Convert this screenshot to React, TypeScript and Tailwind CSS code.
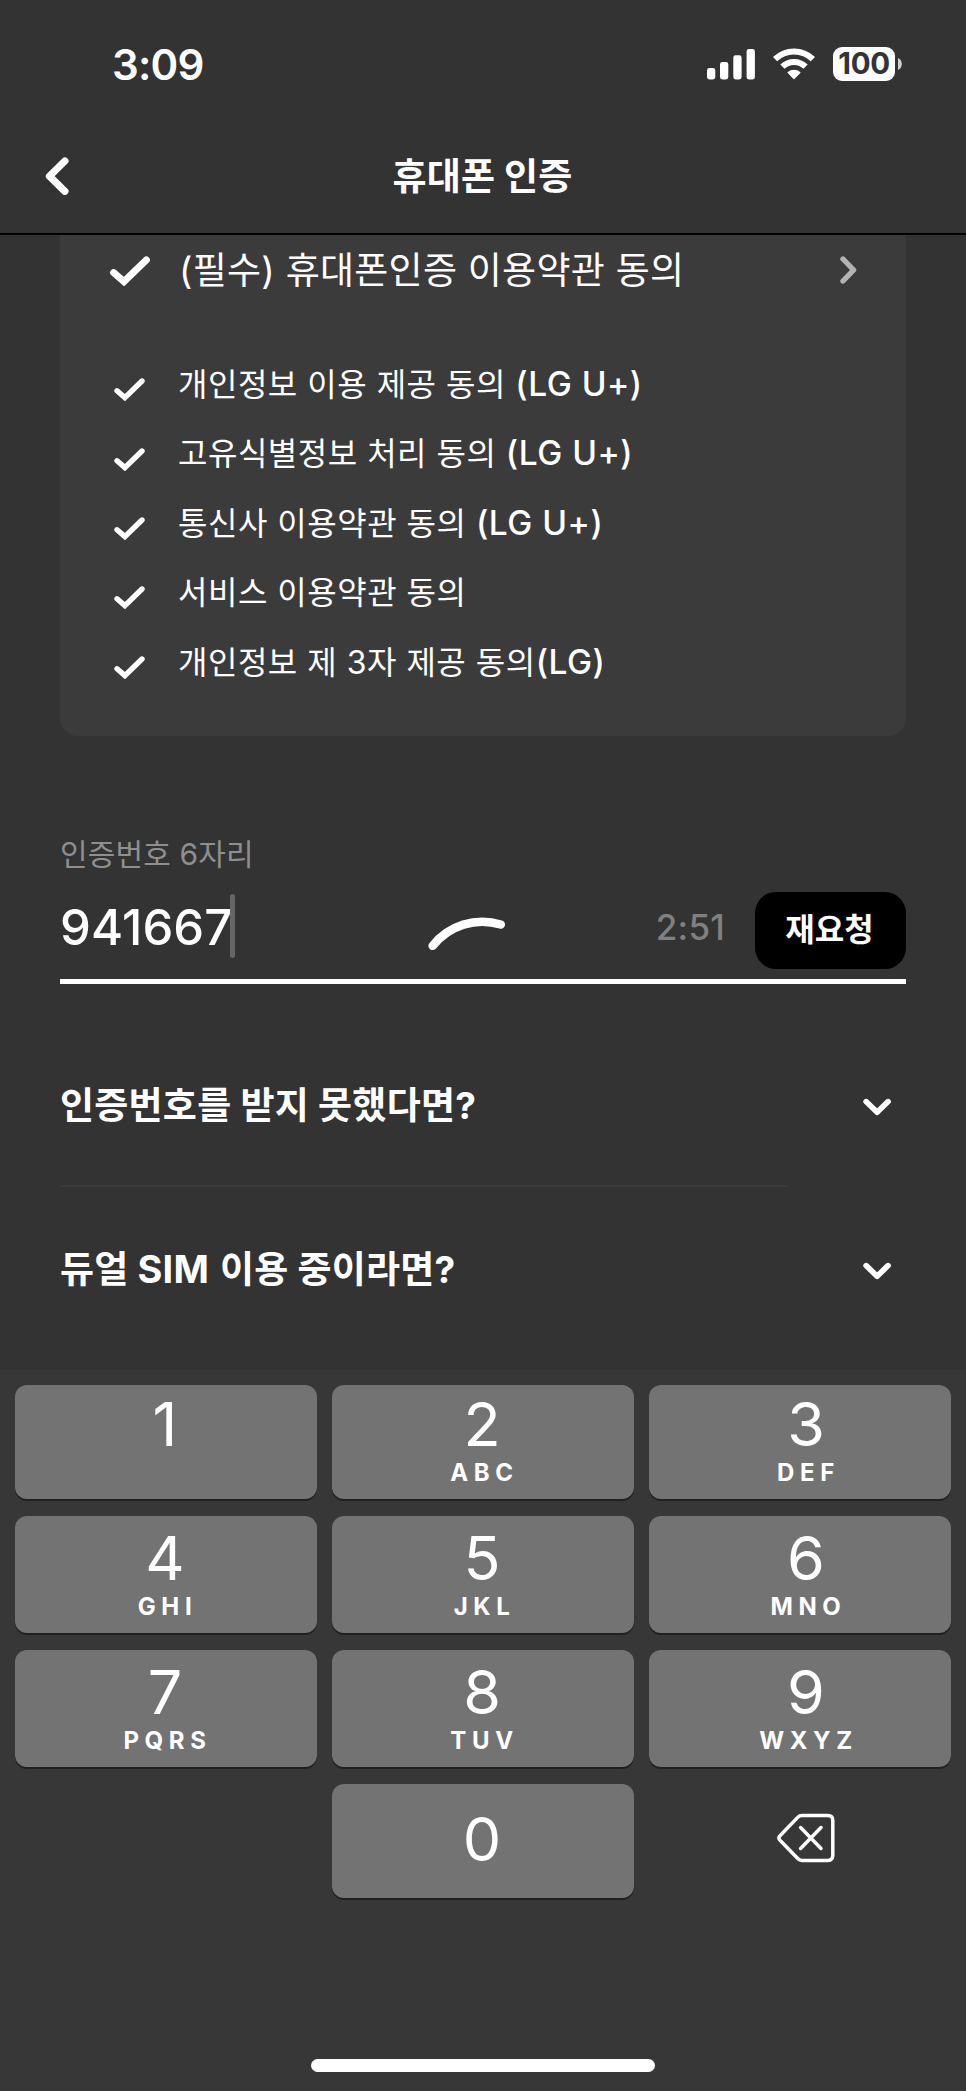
import React from 'react';

interface Key {
  digit: string;
  letters?: string;
}

interface Agreement {
  text: string;
  suffix?: string;
}

const agreements: Agreement[] = [
  { text: '개인정보 이용 제공 동의', suffix: ' (LG U+)' },
  { text: '고유식별정보 처리 동의', suffix: ' (LG U+)' },
  { text: '통신사 이용약관 동의', suffix: ' (LG U+)' },
  { text: '서비스 이용약관 동의' },
  { text: '개인정보 제 3자 제공 동의', suffix: '(LG)' }
];

const keys: Key[] = [
  { digit: '1' },
  { digit: '2', letters: 'ABC' },
  { digit: '3', letters: 'DEF' },
  { digit: '4', letters: 'GHI' },
  { digit: '5', letters: 'JKL' },
  { digit: '6', letters: 'MNO' },
  { digit: '7', letters: 'PQRS' },
  { digit: '8', letters: 'TUV' },
  { digit: '9', letters: 'WXYZ' }
];

const CheckIcon = ({ className }: { className: string }) => (
  <svg viewBox="0 0 40 30" fill="none" className={className}>
    <path d="M3.7 16.6L14 25.6L36.3 3.9" stroke="white" strokeWidth="7" strokeLinecap="round" />
  </svg>
);

const ChevronDown = () => (
  <svg viewBox="0 0 30 20" fill="none" className="w-[30px] h-5 mr-[14px] mt-[3px]">
    <path d="M4.1 4.6L15.1 15.2L26.1 4.6" stroke="white" strokeWidth="5.6" strokeLinecap="round" strokeLinejoin="round" />
  </svg>
);

const StatusBar = () => (
  <div className="flex h-[128px] pl-[112px] pr-[64px] justify-between items-center">
    <span className="text-[42px] font-semibold leading-none tracking-[-0.8px] mt-[2px]">3:09</span>
    <div className="flex items-center">
      <svg viewBox="0 0 48 32" className="w-12 h-8" fill="white">
        <rect x="0" y="20" width="8.3" height="11.4" rx="2.4" />
        <rect x="13" y="14" width="8.3" height="17.4" rx="2.4" />
        <rect x="26.3" y="7.3" width="8.3" height="24.1" rx="2.4" />
        <rect x="39.6" y="1" width="8.3" height="30.4" rx="2.4" />
      </svg>
      <svg viewBox="0 0 42 32" className="w-[42px] h-8 ml-[18px]" fill="none">
        <path d="M2.1 11.2A27 27 0 0 1 39.9 11.2" stroke="white" strokeWidth="6" />
        <path d="M9.4 18.7A16.6 16.6 0 0 1 32.6 18.7" stroke="white" strokeWidth="6" />
        <path d="M21 30.6L15.2 24.6A9 9 0 0 1 26.8 24.6Z" fill="white" stroke="white" strokeWidth="1.4" strokeLinejoin="round" />
      </svg>
      <div className="w-[62px] h-[34px] ml-[18px] bg-white rounded-[9px] flex items-center justify-center">
        <span className="text-[29.5px] font-bold leading-none text-[#333333] tracking-[-0.4px]">100</span>
      </div>
      <svg viewBox="0 0 4 12" className="w-1 h-3 ml-[3px]" fill="#d0d0d0">
        <path d="M0 0C5 1.5 5 10.5 0 12Z" />
      </svg>
    </div>
  </div>
);

const Header = () => (
  <header className="grid grid-cols-[100px_1fr_100px] h-[107px] pb-[9px] items-center border-b-2 border-black">
    <svg viewBox="0 0 24 40" fill="none" className="w-6 h-10 ml-[45px]">
      <path d="M19.9 5L4.4 20.2L19.9 35.3" stroke="white" strokeWidth="7.2" strokeLinecap="round" strokeLinejoin="round" />
    </svg>
    <h1 className="text-center text-[37px] font-bold leading-none tracking-[0.15px] pr-px">휴대폰 인증</h1>
  </header>
);

const Agreements = () => (
  <section className="mx-[60px] h-[501px] bg-[#3b3b3b] rounded-b-[18px] px-[50px]">
    <div className="flex items-center h-[72px]">
      <CheckIcon className="w-10 h-[30px]" />
      <span className="ml-[29px] mb-[2px] text-[37px] leading-none tracking-[0.25px] whitespace-nowrap">(필수) 휴대폰인증 이용약관 동의</span>
      <svg viewBox="0 0 18 30" fill="none" className="w-[18px] h-[30px] ml-auto -mr-px mb-[3px]">
        <path d="M4 4L14.6 15L4 26" stroke="#b3b3b3" strokeWidth="5.4" strokeLinecap="round" strokeLinejoin="round" />
      </svg>
    </div>
    <ul className="pt-[43px] pl-1">
      {agreements.map((item) => (
        <li key={item.text} className="flex items-center h-[69.4px]">
          <CheckIcon className="w-[31px] h-[23px] mt-[10px]" />
          <span className="ml-[33px] text-[32px] leading-none tracking-[0.5px] whitespace-pre">
            {item.text}
            {item.suffix && <span className="text-[33.5px] font-[450] leading-none">{item.suffix}</span>}
          </span>
        </li>
      ))}
    </ul>
  </section>
);

const CodeField = () => (
  <section className="mx-[60px] pt-[98px]">
    <label className="block h-[40px] text-[30px] leading-[40px] tracking-[0.15px] text-[#8f8f8f]">인증번호 6자리</label>
    <div className="flex items-center h-[110px] pt-[4px] border-b-[5px] border-white">
      <span className="text-[49px] font-medium leading-none tracking-[0.1px] w-[170px] mb-[3px] whitespace-nowrap">941667</span>
      <span className="w-[5px] h-16 mb-[5px] rounded-sm bg-[#666666]" />
      {/* Loading spinner */}
      <svg viewBox="0 0 80 40" fill="none" className="w-20 h-10 ml-[192px] mt-[11px]">
        <path d="M5.7 31.8A63.2 63.2 0 0 1 73.7 10.5" stroke="white" strokeWidth="8.6" strokeLinecap="round" />
      </svg>
      <span className="ml-auto mr-[30px] mb-[2px] text-[35px] font-[450] leading-none tracking-[0.2px] text-[#808080]">2:51</span>
      <button className="w-[151px] h-[77px] mt-[3px] pr-[2px] rounded-[21px] bg-black text-[32px] font-bold leading-none">재요청</button>
    </div>
  </section>
);

const Faq = () => (
  <section className="mx-[60px] pt-[39px]">
    <div className="flex items-center justify-between h-[164px]">
      <span className="text-[37px] font-bold leading-none tracking-[0.25px]">인증번호를 받지 못했다면?</span>
      <ChevronDown />
    </div>
    <div className="w-[728px] h-0.5 -mt-0.5 bg-[#3b3b3b]" />
    <div className="flex items-center justify-between h-[164px]">
      <span className="text-[37px] font-bold leading-none tracking-[0.2px]">
        듀얼 <span className="text-[38px] leading-none mr-[2px]">SIM</span> 이용 중이라면?
      </span>
      <ChevronDown />
    </div>
  </section>
);

const Keypad = () => (
  <div className="h-[721px] bg-[#373737] px-[15px] pt-[15px] flex flex-col">
    <div className="grid grid-cols-3 grid-rows-[114px_117px_117px_114px] gap-x-[15px] gap-y-[17px]">
      {keys.map((key, i) => (
        <button
          key={key.digit}
          className={`rounded-[12px] bg-[#737373] shadow-[0_2px_0_#202020] flex flex-col items-center justify-end pb-[14px] ${i % 3 === 2 ? 'pl-3' : 'pr-[2px]'}`}
        >
          <span className="text-[61px] leading-[62px] h-[62px]">{key.digit}</span>
          <span className="text-[24px] font-bold leading-6 h-6 mt-[6px] pl-[5px] tracking-[5.6px]">{key.letters}</span>
        </button>
      ))}
      <span />
      <button className="rounded-[12px] bg-[#737373] shadow-[0_2px_0_#202020] text-[61px] leading-none pb-1 pr-[2px]">0</button>
      <button className="flex items-center justify-center pl-3 pb-[6px]">
        <svg viewBox="0 0 58 50" fill="none" className="w-[58px] h-[50px]" stroke="white" strokeWidth="3.5" strokeLinecap="round" strokeLinejoin="round">
          <path d="M25 2.6H51Q55.8 2.6 55.8 7.4V42.6Q55.8 47.4 51 47.4H25Q22.5 47.4 20.7 45.6L3 27.3Q0.8 25 3 22.7L20.7 4.4Q22.5 2.6 25 2.6Z" />
          <path d="M23.6 14.6L44 35.4M44 14.6L23.6 35.4" />
        </svg>
      </button>
    </div>
    <div className="w-[344px] h-[13px] mt-auto mb-[19px] mx-auto rounded-full bg-white" />
  </div>
);

export default function App() {
  return (
    <div className="w-[966px] h-[2091px] overflow-hidden flex flex-col bg-[#333333] text-white font-['Inter','Noto_Sans_CJK_KR',sans-serif]">
      <StatusBar />
      <Header />
      <Agreements />
      <CodeField />
      <Faq />
      <div className="mt-auto">
        <Keypad />
      </div>
    </div>
  );
}
